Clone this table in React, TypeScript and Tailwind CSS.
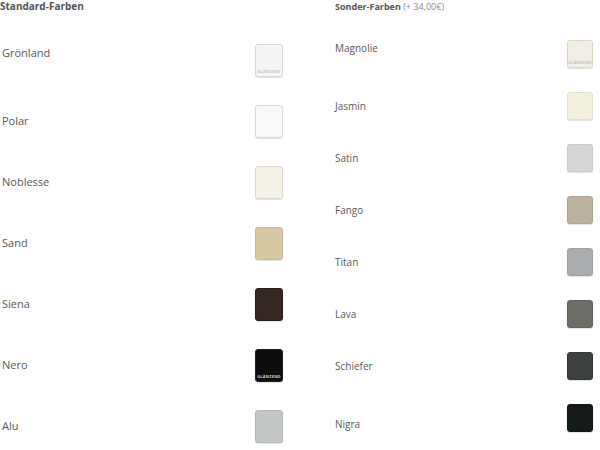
type Swatch = {
  name: string;
  color: string;
  gloss?: boolean;
  shift?: string;
  edge?: string;
};

const standard: Swatch[] = [
  { name: "Grönland", color: "bg-[#f5f5f5]", gloss: true, shift: "-mt-[14px]", edge: "border-[#d9d9d9]" },
  { name: "Polar", color: "bg-[#f9f9f9]", edge: "border-[#d9d9d9]" },
  { name: "Noblesse", color: "bg-[#f4f1e7]", edge: "border-[#ddd8c8]" },
  { name: "Sand", color: "bg-[#d8c9a3]", edge: "border-[#cbbb94]" },
  { name: "Siena", color: "bg-[#352621]", edge: "border-[#2a1d19]" },
  { name: "Nero", color: "bg-[#0c0c0c]", gloss: true, edge: "border-[#222]" },
  { name: "Alu", color: "bg-[#c4c7c7]", edge: "border-[#b6b9b9]" },
];

const special: Swatch[] = [
  { name: "Magnolie", color: "bg-[#f0eee5]", gloss: true, shift: "-mt-[12px]", edge: "border-[#dcd6c4]" },
  { name: "Jasmin", color: "bg-[#f3f0df]", edge: "border-[#e2ddc9]" },
  { name: "Satin", color: "bg-[#d7d7d7]", edge: "border-[#cacaca]" },
  { name: "Fango", color: "bg-[#bdb29e]", edge: "border-[#b0a590]" },
  { name: "Titan", color: "bg-[#a9adb0]", edge: "border-[#9da1a4]" },
  { name: "Lava", color: "bg-[#6d6c67]", edge: "border-[#62615c]" },
  { name: "Schiefer", color: "bg-[#3d4240]", edge: "border-[#343937]" },
  { name: "Nigra", color: "bg-[#141a1a]", shift: "mt-[12px]", edge: "border-[#101414]" },
];

function Tile({ s, size }: { s: Swatch; size: string }) {
  return (
    <div
      className={`${size} ${s.color} ${s.edge} relative shrink-0 rounded-[3px] border shadow-[0_1px_1px_rgba(0,0,0,0.12)] overflow-hidden`}
    >
      {s.gloss && (
        <span
          className={`absolute bottom-[2px] left-0 right-0 text-center text-[4px] leading-none font-bold tracking-[0.2px] ${
            s.name === "Nero" ? "text-[#cfcfcf]" : "text-[#c9c5bb]"
          }`}
        >
          GLÄNZEND
        </span>
      )}
    </div>
  );
}

export default function App() {
  return (
    <div
      className="w-[600px] h-[450px] bg-white flex overflow-hidden text-[#595959]"
      style={{ fontFamily: '"Open Sans", "Liberation Sans", sans-serif' }}
    >
      {/* Standard-Farben */}
      <section className="w-[283px] shrink-0 flex flex-col">
        <h2 className="h-[30px] shrink-0 text-[10px] leading-[12px] font-bold text-[#555]">Standard-Farben</h2>
        {standard.map((s) => (
          <div key={s.name} className="h-[61px] shrink-0 flex items-center justify-between pl-[2px]">
            <span className={`text-[11px] ${s.shift ?? ""}`}>{s.name}</span>
            <Tile s={s} size="w-[28px] h-[33px]" />
          </div>
        ))}
      </section>

      {/* Sonder-Farben */}
      <section className="ml-[52px] w-[258px] shrink-0 flex flex-col">
        <h2 className="h-[28px] shrink-0 pt-[1px] text-[9px] leading-[12px] text-[#555]">
          <span className="font-bold">Sonder-Farben</span>{" "}
          <span className="text-[#8a8a8a]">(+ 34,00€)</span>
        </h2>
        {special.map((s) => (
          <div key={s.name} className="h-[52px] shrink-0 flex items-center justify-between">
            <span className={`text-[10px] ${s.shift ?? ""}`}>{s.name}</span>
            <Tile s={s} size="w-[26px] h-[28px]" />
          </div>
        ))}
      </section>
    </div>
  );
}
